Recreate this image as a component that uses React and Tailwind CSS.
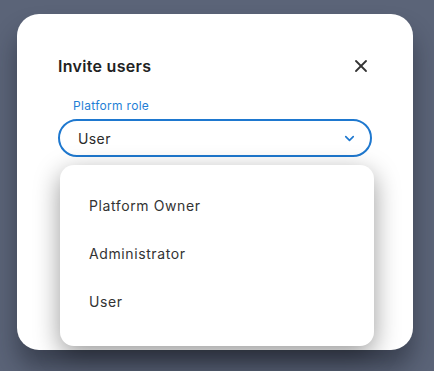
import { X, ChevronDown } from 'lucide-react'

const roles = ['Platform Owner', 'Administrator', 'User']

export default function App() {
  return (
    <div className="h-[371px] w-[434px] overflow-hidden bg-[#5b6478] pt-[14px] pl-[17px]" style={{ fontFamily: 'Inter, "Noto Sans", sans-serif' }}>
      <div className="relative h-[336px] w-[396px] rounded-[22px] bg-white px-[41px] pt-[41px] shadow-[0_18px_24px_rgba(20,25,35,0.45)]">
        <div className="flex items-center justify-between">
          <h2 className="text-[16px] font-semibold leading-[22px] tracking-[0.3px] text-[#222]">Invite users</h2>
          <X className="mr-[1px] h-[20px] w-[20px] text-[#333]" strokeWidth={2.2} />
        </div>
        <label className="mt-[21px] block pl-[15px] text-[12px] leading-[16px] tracking-[0.3px] text-[#1f7fd6]">Platform role</label>
        <div className="mt-[5px] flex h-[38px] w-[314px] items-center justify-between rounded-full border-2 border-[#1e78cf] pl-[18px] pr-[13px]">
          <span className="text-[14px] tracking-[0.4px] text-[#2a2a2a]">User</span>
          <ChevronDown className="h-[15px] w-[15px] text-[#1e78cf]" strokeWidth={2.6} />
        </div>
        <div className="absolute left-[43px] top-[151px] h-[181px] w-[314px] rounded-[14px] bg-white py-[16px] shadow-[0_8px_26px_rgba(0,0,0,0.4)]">
          {roles.map(r => (
            <div key={r} className="flex h-[48px] items-center pl-[29px] text-[14px] tracking-[0.6px] text-[#333]">{r}</div>
          ))}
        </div>
      </div>
    </div>
  )
}
